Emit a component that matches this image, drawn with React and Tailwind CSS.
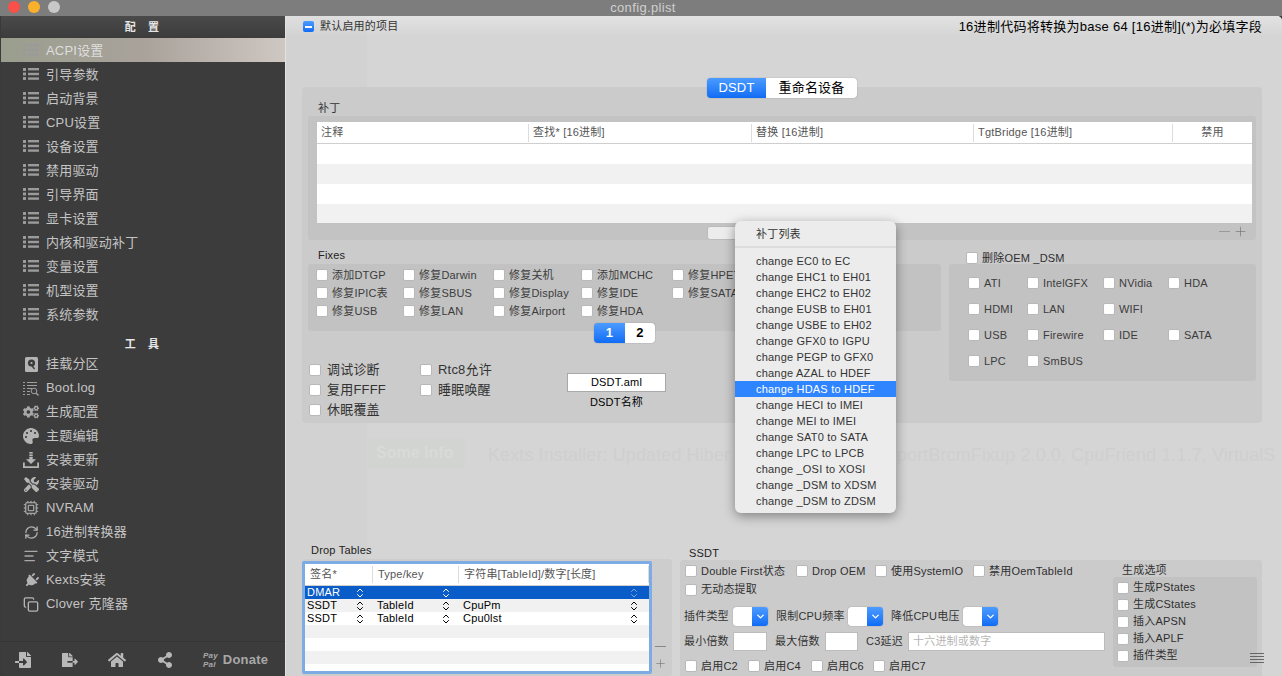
import React from "react";
import { ChevronDown, ChevronsUpDown, Cpu, RefreshCw, AlignLeft, Copy, Plus } from "lucide-react";
import { FaCogs, FaPalette, FaTools, FaPlug, FaHome, FaShareAlt, FaFileImport, FaFileExport } from "react-icons/fa";

const ListIcon = () => (
  <svg width="16" height="14" viewBox="0 0 16 14" className="text-[#9a9a9a]" fill="currentColor">
    <rect x="0" y="1" width="3" height="3" /><rect x="0" y="5.5" width="3" height="3" /><rect x="0" y="10" width="3" height="3" />
    <rect x="5" y="1" width="11" height="2.4" /><rect x="5" y="5.8" width="11" height="2.4" /><rect x="5" y="10.4" width="11" height="2.4" />
  </svg>
);
const DiskIcon = () => (
  <svg width="13" height="15" viewBox="0 0 13 15" className="text-[#b4b4b4]">
    <rect x="0" y="0" width="13" height="15" rx="1.5" fill="currentColor" />
    <circle cx="6.5" cy="6" r="3.6" fill="#3c3c3c" />
    <circle cx="6.5" cy="6" r="1.1" fill="currentColor" />
    <path d="M6.5 8l3 4" stroke="#3c3c3c" strokeWidth="1.4" />
  </svg>
);
const LogIcon = () => (
  <svg width="16" height="15" viewBox="0 0 16 15" className="text-[#a0a0a0]" fill="none" stroke="currentColor">
    <path d="M0 1.5h2M0 4.5h2M0 7.5h2M0 10.5h2M0 13.5h2M4 1.5h10M4 4.5h10M4 7.5h5M4 10.5h3M4 13.5h3" />
    <circle cx="11" cy="10" r="2.8" /><path d="M13 12l2.5 2.5" strokeWidth="1.4" />
  </svg>
);
const DownloadIcon = () => (
  <svg width="16" height="16" viewBox="0 0 16 16" className="text-[#b4b4b4]" fill="currentColor">
    <rect x="6.3" y="0" width="3.4" height="1.6" /><rect x="6.3" y="2.4" width="3.4" height="1.6" />
    <path d="M6.3 4.8h3.4v2.4H13L8 12 3 7.2h3.3zM0 10.5h1.8v3.7h12.4v-3.7H16V16H0z" />
  </svg>
);

const cfg = ["ACPI设置","引导参数","启动背景","CPU设置","设备设置","禁用驱动","引导界面","显卡设置","内核和驱动补丁","变量设置","机型设置","系统参数"];
const tools = [
  ["挂载分区", <DiskIcon />],
  ["Boot.log", <LogIcon />],
  ["生成配置", <FaCogs size={16} className="text-[#a8a8a8]" />],
  ["主题编辑", <FaPalette size={16} className="text-[#b4b4b4]" />],
  ["安装更新", <DownloadIcon />],
  ["安装驱动", <FaTools size={15} className="text-[#b4b4b4]" />],
  ["NVRAM", <Cpu size={16} className="text-[#a0a0a0]" />],
  ["16进制转换器", <RefreshCw size={15} className="text-[#b4b4b4]" />],
  ["文字模式", <AlignLeft size={16} className="text-[#a8a8a8]" />],
  ["Kexts安装", <FaPlug size={15} className="text-[#b4b4b4] rotate-45" />],
  ["Clover 克隆器", <Copy size={17} className="text-[#b4b4b4]" />],
];
const patches = ["change EC0 to EC","change EHC1 to EH01","change EHC2 to EH02","change EUSB to EH01","change USBE to EH02","change GFX0 to IGPU","change PEGP to GFX0","change AZAL to HDEF","change HDAS to HDEF","change HECI to IMEI","change MEI to IMEI","change SAT0 to SATA","change LPC to LPCB","change _OSI to XOSI","change _DSM to XDSM","change _DSM to ZDSM"];

const Box = () => <span className="block w-[12px] h-[12px] shrink-0 rounded-[2px] bg-white border border-[#b8b8b8]" />;
const Check = ({ label, className = "", text = "text-[#2f2f2f]" }) => (
  <div className={"flex items-center gap-[4px] whitespace-nowrap " + className}>
    <Box /><span className={text}>{label}</span>
  </div>
);
const Blue = "bg-gradient-to-b from-[#4b9bff] to-[#0f6cf5]";

function Sidebar() {
  return (
    <aside className="w-[284px] shrink-0 bg-[#3c3c3c] rounded-bl-[5px] flex flex-col ml-[1px] text-[13px] text-[#c4c4c4]">
      <div className="h-[22px] flex items-center justify-center gap-[12px] font-bold text-[11px] text-[#e6e6e6] bg-gradient-to-b from-[#4a4a4a] to-[#3c3c3c] pr-[2px]"><span>配</span><span>置</span></div>
      {cfg.map((t, i) => (
        <div key={t} className={"h-[24px] flex items-center pl-[22px] gap-[7px] " + (i === 0 ? "bg-gradient-to-r from-[#9a9e8e] via-[#a9a29b] to-[#cfc7c1] text-[#dedede]" : "")}>
          <ListIcon /><span className="pt-[1px]">{t}</span>
        </div>
      ))}
      <div className="h-[26px] flex items-end justify-center gap-[12px] font-bold text-[11px] text-[#e6e6e6] pr-[2px]"><span>工</span><span>具</span></div>
      {tools.map(([t, ic]) => (
        <div key={t} className="h-[24px] flex items-center pl-[22px] gap-[7px]">
          <span className="w-[16px] flex justify-center">{ic}</span><span>{t}</span>
        </div>
      ))}
      <div className="mt-auto h-[35px] border-t border-[#353535] flex items-center pl-[14px] pt-[2px] text-[#b8b8b8]">
        <FaFileImport size={16} />
        <FaFileExport size={16} className="ml-[31px]" />
        <FaHome size={18} className="ml-[30px]" />
        <FaShareAlt size={16} className="ml-[31px]" />
        <div className="ml-[30px] flex flex-col italic text-[8px] leading-[9px] font-bold text-[#a8a8a8]"><span>Pay</span><span>Pal</span></div>
        <span className="ml-[5px] font-bold text-[13px] text-[#a8a8a8]">Donate</span>
      </div>
    </aside>
  );
}

function PatchTable() {
  const cols = [[212, "注释"], [223, "查找* [16进制]"], [222, "替换 [16进制]"], [199, "TgtBridge [16进制]"], [79, "禁用"]];
  return (
    <div className="bg-[#c3c3c3] rounded-[3px] mx-[6px] pt-[6px] pl-[9px] pr-[4px] h-[124px]">
      <div className="bg-white h-[101px] flex flex-col">
        <div className="h-[22px] flex items-center border-b border-[#cfcfcf] text-[#555] text-[11px] shrink-0">
          {cols.map(([w, t], i) => (
            <div key={t} style={{ width: w }} className={"h-[18px] flex items-center px-[4px] shrink-0 " + (i < 4 ? "border-r border-[#dcdcdc] " : "justify-center ")}>{t}</div>
          ))}
        </div>
        <div className="h-[20px]" />
        <div className="h-[20px] bg-[#f1f1f1]" />
        <div className="h-[20px]" />
        <div className="flex-1 bg-[#f1f1f1]" />
      </div>
      <div className="relative h-[17px] flex items-center justify-end gap-[3px] pr-[4px] text-[#6f6f6f]">
        <div className="absolute left-[390px] top-[3px] w-[60px] h-[14px] rounded-[3px] bg-[#ececec] border border-[#bbb]" />
        <span className="w-[11px] h-[1px] bg-[#999]" />
        <Plus size={15} strokeWidth={1} />
      </div>
    </div>
  );
}

function Fixes() {
  const rows = [
    ["添加DTGP","修复Darwin","修复关机","添加MCHC","修复HPET"],
    ["修复IPIC表","修复SBUS","修复Display","修复IDE","修复SATA"],
    ["修复USB","修复LAN","修复Airport","修复HDA",""],
  ];
  const w = ["w-[87px]","w-[90px]","w-[88px]","w-[91px]","w-[80px]"];
  return (
    <div className="w-[633px] shrink-0 flex flex-col">
      <div className="h-[24px] flex items-end pl-[10px] text-[11px] text-[#222] pb-[1px]">Fixes</div>
      <div className="h-[67px] bg-[#c2c2c2] rounded-[3px] pl-[8px] pt-[2px] text-[11px]">
        {rows.map((r, i) => (
          <div key={i} className="h-[18px] flex items-center">
            {r.map((t, j) => <div key={j} className={w[j]}>{t && <Check label={t} text="text-[#3c3c3c]" />}</div>)}
          </div>
        ))}
      </div>
      <div className="-mt-[8px] ml-[286px] h-[20px] w-[61px] flex rounded-[4px] overflow-hidden shadow-[0_0_1px_rgba(0,0,0,0.5)] text-[13px] font-bold relative">
        <div className={Blue + " w-[31px] flex items-center justify-center text-white"}>1</div>
        <div className="flex-1 bg-white flex items-center justify-center text-black">2</div>
      </div>
      <div className="mt-[17px] pl-[1px] flex h-[60px] text-[13px] text-[#2b2b2b]">
        <div className="w-[111px] flex flex-col">
          {["调试诊断","复用FFFF","休眠覆盖"].map(t => <Check key={t} label={t} className="h-[20px]" text="text-[#333] ml-[2px]" />)}
        </div>
        <div className="w-[147px] flex flex-col">
          {["Rtc8允许","睡眠唤醒"].map(t => <Check key={t} label={t} className="h-[20px]" text="text-[#333] ml-[2px]" />)}
        </div>
        <div className="w-[99px] flex flex-col items-center pt-[13px] text-[11px] text-black">
          <div className="w-[99px] h-[19px] bg-white border border-[#a9a9a9] flex items-center justify-center">DSDT.aml</div>
          <div className="mt-[2px]">DSDT名称</div>
        </div>
      </div>
    </div>
  );
}

function Oem() {
  const rows = [["ATI","IntelGFX","NVidia","HDA"],["HDMI","LAN","WIFI",""],["USB","Firewire","IDE","SATA"],["LPC","SmBUS","",""]];
  const w = ["w-[59px]","w-[76px]","w-[65px]","w-[70px]"];
  return (
    <div className="w-[307px] shrink-0 flex flex-col">
      <div className="h-[24px] flex items-center pl-[17px] pt-[12px] text-[11px] text-[#333]"><Check label="删除OEM _DSM" /></div>
      <div className="h-[117px] bg-[#c2c2c2] rounded-[3px] pl-[19px] pt-[6px] text-[11px]">
        {rows.map((r, i) => (
          <div key={i} className="h-[26px] flex items-center">
            {r.map((t, j) => <div key={j} className={w[j]}>{t && <Check label={t} text="text-[#3c3c3c]" />}</div>)}
          </div>
        ))}
      </div>
    </div>
  );
}

function DropTables() {
  const rows = [["DMAR","",""],["SSDT","TableId","CpuPm"],["SSDT","TableId","Cpu0lst"]];
  const cw = ["w-[68px]","w-[86px]","w-[190px]"];
  return (
    <div className="w-[370px] shrink-0 flex flex-col">
      <div className="h-[17px] pl-[9px] text-[11px] text-[#222] leading-[16px]">Drop Tables</div>
      <div className="flex-1 bg-[#cdcdcd] rounded-[3px] relative pt-[2px]">
        <div className="w-[350px] h-[113px] border-[3px] border-[#7dabe4] rounded-[2px] bg-white flex flex-col text-[11px] overflow-hidden">
          <div className="h-[22px] flex items-center border-b border-[#cfcfcf] text-[#555] shrink-0">
            {["签名*","Type/key","字符串[TableId]/数字[长度]"].map((t, i) => (
              <div key={t} className={cw[i] + " h-[17px] pl-[5px] flex items-center border-r border-[#dcdcdc] shrink-0"}>{t}</div>
            ))}
          </div>
          {rows.map((r, i) => (
            <div key={i} className={"h-[13px] flex items-center shrink-0 " + (i === 0 ? "bg-[#0a5cc8] text-white" : i === 1 ? "bg-[#f1f1f1] text-black" : "text-black")}>
              {r.map((t, j) => (
                <div key={j} className={cw[j] + " flex items-center justify-between " + (j === 0 ? "pl-[2px] " : "pl-[4px] ") + (j === 2 ? "pr-[9px] " : "pr-[7px] ") + "shrink-0"}>
                  <span>{t}</span><ChevronsUpDown size={12} className={i === 0 && j === 2 ? "text-[#7fa8e0]" : ""} />
                </div>
              ))}
            </div>
          ))}
          <div className="h-[13px] bg-[#f1f1f1] shrink-0" />
          <div className="h-[13px] shrink-0" />
          <div className="h-[13px] bg-[#f1f1f1] shrink-0" />
        </div>
        <div className="absolute left-[352px] top-[87px] flex flex-col items-center gap-[10px] text-[#666]">
          <span className="w-[11px] h-[1px] bg-[#888]" />
          <Plus size={13} strokeWidth={1} />
        </div>
      </div>
    </div>
  );
}

const Select = () => (
  <div className="w-[35px] h-[19px] flex rounded-[3px] overflow-hidden bg-white shadow-[0_0_1px_rgba(0,0,0,0.5)]">
    <div className="flex-1" />
    <div className={Blue + " w-[16px] flex items-center justify-center text-white"}><ChevronDown size={11} strokeWidth={3} /></div>
  </div>
);
const Input = ({ className = "", children }) => (
  <div className={"h-[19px] bg-white border border-[#bcbcbc] flex items-center pl-[4px] text-[#b5b5b5] " + className}>{children}</div>
);

function Ssdt() {
  return (
    <div className="flex-1 flex flex-col ml-[8px]">
      <div className="h-[18px] pl-[9px] text-[11px] text-[#222] leading-[22px]">SSDT</div>
      <div className="flex-1 bg-[#cbcbcb] rounded-[3px] pl-[5px] relative text-[11px] text-[#333]">
        <div className="h-[20px] flex items-center pt-[2px]">
          <Check label="Double First状态" className="w-[111px]" />
          <Check label="Drop OEM" className="w-[79px]" />
          <Check label="使用SystemIO" className="w-[98px]" />
          <Check label="禁用OemTableId" />
        </div>
        <div className="h-[19px] flex items-center"><Check label="无动态提取" /></div>
        <div className="h-[26px] flex items-center mt-[4px] -ml-[1px]">
          <span className="w-[49px]">插件类型</span><Select />
          <span className="ml-[8px] w-[72px]">限制CPU频率</span><Select />
          <span className="ml-[8px] w-[72px]">降低CPU电压</span><Select />
        </div>
        <div className="h-[24px] flex items-center -ml-[1px]">
          <span className="w-[49px]">最小倍数</span><Input className="w-[34px]" />
          <span className="ml-[8px] w-[50px]">最大倍数</span><Input className="w-[33px]" />
          <span className="ml-[8px] w-[42px]">C3延迟</span><Input className="w-[197px]">十六进制或数字</Input>
        </div>
        <div className="h-[26px] flex items-center">
          <Check label="启用C2" className="w-[63px]" />
          <Check label="启用C4" className="w-[63px]" />
          <Check label="启用C6" className="w-[62px]" />
          <Check label="启用C7" />
        </div>
        <div className="absolute left-[433px] top-0 w-[144px]">
          <div className="h-[17px] pl-[9px] leading-[20px] text-[#333]">生成选项</div>
          <div className="h-[90px] bg-[#c2c2c2] rounded-[3px] pl-[4px] pt-[2px]">
            {["生成PStates","生成CStates","插入APSN","插入APLF","插件类型"].map(t => <Check key={t} label={t} className="h-[17px]" />)}
          </div>
        </div>
        <div className="absolute left-[570px] top-[93px] w-[14px] flex flex-col gap-[2px]">
          {[0,1,2,3].map(i => <span key={i} className="h-[1px] bg-[#666]" />)}
        </div>
      </div>
    </div>
  );
}

function Popup() {
  return (
    <div className="absolute left-[449px] top-[205px] w-[161px] h-[292px] rounded-[6px] bg-[#ececec] shadow-[0_3px_12px_rgba(0,0,0,0.4)] text-[11px] text-[#333] z-10">
      <div className="h-[24px] flex items-end pl-[21px] pb-[3px]">补丁列表</div>
      <div className="h-[2px] mt-[1px] bg-[#dcdcdc]" />
      <div className="pt-[5px]">
        {patches.map((t, i) => (
          <div key={t} className={"h-[16px] flex items-center pl-[21px] " + (i === 8 ? "bg-[#2f84ff] text-white" : "")}>{t}</div>
        ))}
      </div>
    </div>
  );
}

export default function App() {
  return (
    <div className="w-[1282px] h-[676px] overflow-hidden bg-[#3a3a3a] flex flex-col [font-family:'Liberation_Sans','Noto_Sans_CJK_SC',sans-serif] tracking-[0.2px]">
      <div className="h-[16px] shrink-0 bg-[#7d7d7d] flex items-center relative">
        <div className="absolute left-[8px] top-[1px] flex gap-[8px]">
          <span className="w-[12px] h-[12px] rounded-full bg-[#f9504a]" />
          <span className="w-[12px] h-[12px] rounded-full bg-[#fbb02b]" />
          <span className="w-[12px] h-[12px] rounded-full bg-[#c8c8c8]" />
        </div>
        <div className="w-full text-center text-[13px] leading-[16px] text-[#cfcfcf] pl-[4px] tracking-[0.35px]">config.plist</div>
      </div>
      <div className="flex-1 flex min-h-0">
        <Sidebar />
        <main className="flex-1 relative rounded-tr-[5px] bg-[#d5d5d5] border-l border-[#e2e2e2] pl-[16px] pr-[20px] flex flex-col overflow-hidden">
          <div className="absolute inset-x-0 top-0 h-[20px] bg-gradient-to-b from-[#e2e2e2] to-[#d5d5d5]" />
          <div className="absolute left-0 top-0 bottom-0 w-[81px] bg-black/[0.012]" />
          <div className="absolute left-[82px] top-[422px] w-[97px] h-[30px] bg-[#d1d4d0] text-[#d8dbd7] font-bold text-[16px] leading-[30px] pl-[8px] whitespace-nowrap tracking-normal">Some Info</div>
          <div className="absolute left-[202px] top-[426px] whitespace-nowrap text-[18px] tracking-[0.1px] text-[#cfcfcf]">Kexts Installer: Updated Hiber</div>
          <div className="absolute left-[611px] top-[426px] whitespace-nowrap text-[18px] tracking-[0.1px] text-[#cfcfcf]">portBrcmFixup 2.0.0, CpuFriend 1.1.7, VirtualS</div>
          <div className="relative h-[21px] shrink-0 flex items-center justify-between text-[11px] text-[#333] -mr-[19px] pr-[19px] pl-[1px]">
            <div className="flex items-center gap-[6px]">
              <span className={"w-[11px] h-[11px] rounded-[2px] flex items-center justify-center " + Blue}><span className="w-[7px] h-[2px] bg-white" /></span>
              <span>默认启用的项目</span>
            </div>
            <span className="text-[13px] text-black tracking-[0.27px]">16进制代码将转换为base 64 [16进制](*)为必填字段</span>
          </div>
          <section className="relative mt-[50px] bg-[#cbcbcb] rounded-[4px] h-[336px] shrink-0">
            <div className="-mt-[9px] flex justify-center relative">
              <div className="h-[20px] flex rounded-[4px] overflow-hidden shadow-[0_0_1px_rgba(0,0,0,0.5)] text-[13px]">
                <div className={Blue + " w-[59px] flex items-center justify-center text-white"}>DSDT</div>
                <div className="w-[91px] bg-white flex items-center justify-center text-black">重命名设备</div>
              </div>
            </div>
            <div className="h-[18px] pl-[16px] text-[11px] text-[#333] leading-[20px]">补丁</div>
            <PatchTable />
            <div className="mx-[6px] flex gap-[8px]">
              <Fixes />
              <Oem />
            </div>
          </section>
          <div className="absolute left-[16px] top-[526px] w-[960px] h-[134px] flex">
            <DropTables />
            <Ssdt />
          </div>
          <Popup />
        </main>
      </div>
    </div>
  );
}
